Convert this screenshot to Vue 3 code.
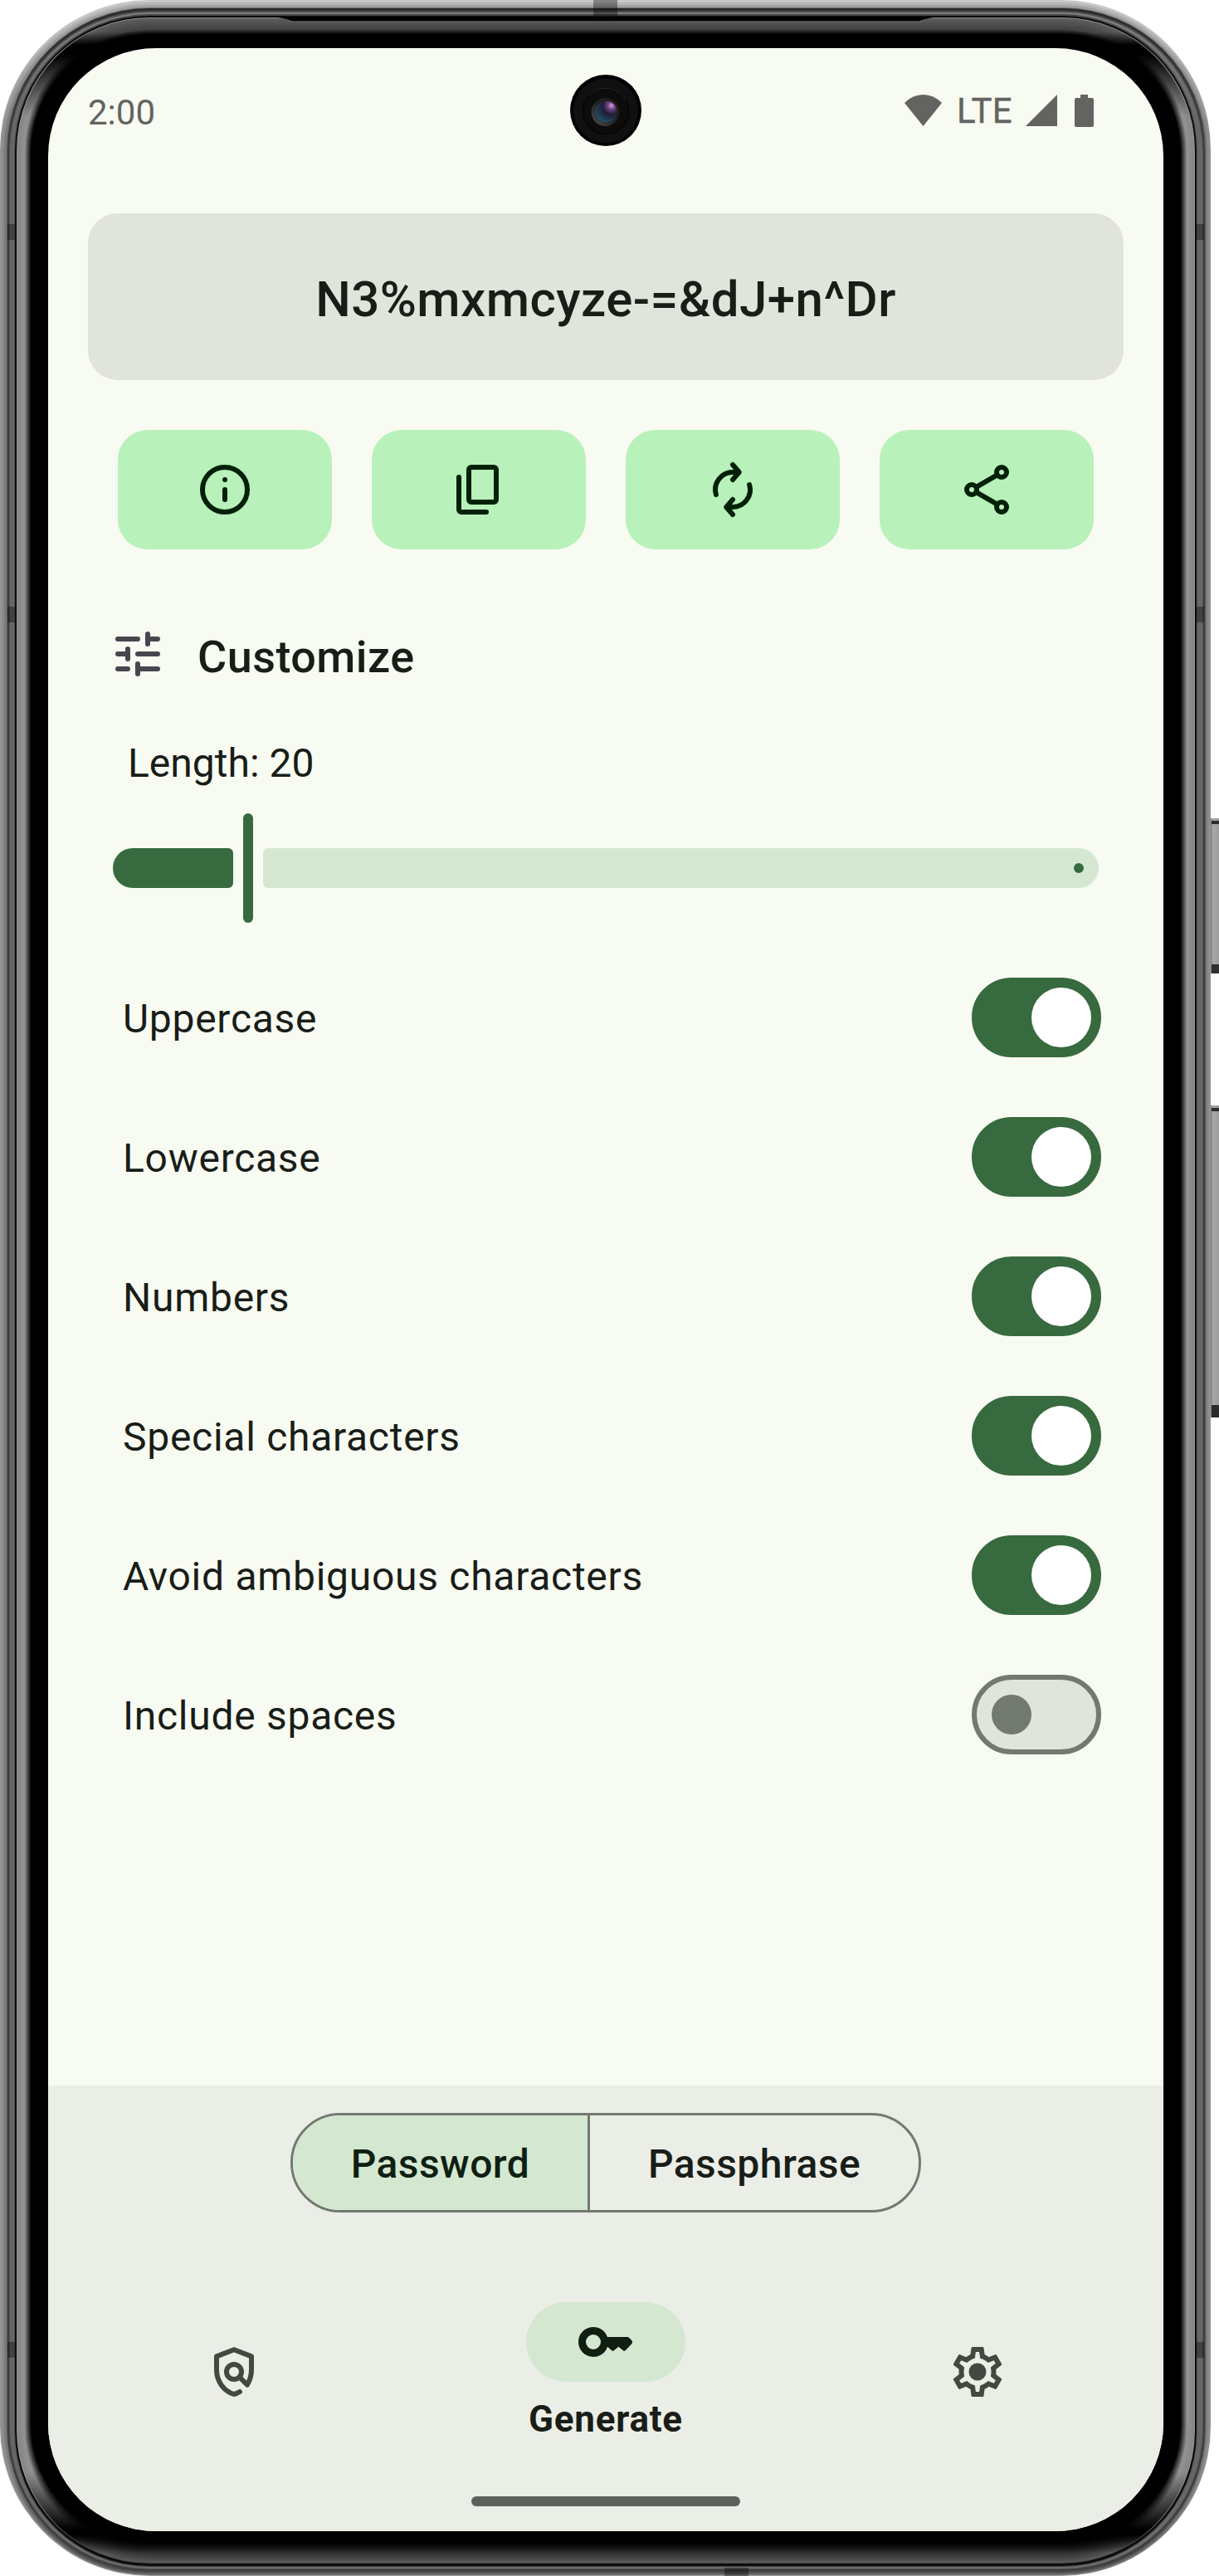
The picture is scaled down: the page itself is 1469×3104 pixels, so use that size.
<script setup>
import { ref } from 'vue'

const password = 'N3%mxmcyze-=&dJ+n^Dr'
const length = ref(20)

const actions = [
  { id: 'info', stroke: ['M12 12v4M12 8v.01', 'M12 3a9 9 0 1 1 0 18a9 9 0 1 1 0-18z'] },
  { id: 'copy', stroke: ['M9 3H18a1 1 0 0 1 1 1V16a1 1 0 0 1-1 1H9a1 1 0 0 1-1-1V4a1 1 0 0 1 1-1z', 'M4 7V20a1 1 0 0 0 1 1H15'] },
  { id: 'refresh', stroke: ['M5.3 14A7 7 0 0 1 12 5h2.5M12 2l2.6 3-2.6 3', 'M18.7 10A7 7 0 0 1 12 19h-2.5M12 22l-2.6-3 2.6-3'] },
  { id: 'share', stroke: ['M8 10.9 16.2 6.1M8 13.1l8.2 4.8', 'M18 3a2 2 0 1 1 0 4a2 2 0 1 1 0-4z', 'M6 10a2 2 0 1 1 0 4a2 2 0 1 1 0-4z', 'M18 17a2 2 0 1 1 0 4a2 2 0 1 1 0-4z'] }
]

const options = ref([
  { label: 'Uppercase', on: true },
  { label: 'Lowercase', on: true },
  { label: 'Numbers', on: true },
  { label: 'Special characters', on: true },
  { label: 'Avoid ambiguous characters', on: true },
  { label: 'Include spaces', on: false }
])

// Bezel layers, outermost first: [left, top, right, bottom] insets and the
// grey level at the top, side and bottom of the body.
const rim = [
  [0, 0, 0, 0, 200, 150, 160],
  [2, 3, 1, 1, 182, 140, 110],
  [5, 6, 4, 3, 162, 122, 84],
  [8, 9, 6, 5, 110, 92, 70],
  [9, 10, 7, 6, 44, 60, 62],
  [11, 13, 9, 8, 80, 84, 84],
  [12, 15, 10, 9, 125, 102, 108],
  [17, 17, 16, 11, 70, 84, 60],
  [18, 19, 17, 12, 20, 20, 20],
  [19, 20, 18, 13, 0, 0, 10],
  [20, 21, 19, 15, 140, 150, 70]
]
const glass = []
for (let i = 0; i <= 16; i++) {
  const t = i / 16
  glass.push([
    21 + 16 * t, 22 + 19 * t, 20 + 16 * t, 16 + 24 * t,
    t < 0.75 ? 92 - 40 * t : 62 * (1 - t) * 3,
    t < 0.5 ? 134 + 24 * t : 146 * (1 - t) * 2,
    88 * (1 - t)
  ])
}
const rings = [
  ...rim.map((v) => ({ v, inner: false })),
  ...glass.map((v) => ({ v, inner: true }))
].map(({ v, inner }, i) => ({
  id: 'ring' + i,
  inner,
  x: v[0],
  y: v[1],
  w: 1459 - v[0] - v[2],
  h: 3104 - v[1] - v[3],
  r: 180 - v[0],
  top: grey(v[4]),
  side: grey(v[5]),
  bottom: grey(v[6])
}))
function grey(n) {
  const k = Math.round(Math.max(0, n))
  return `rgb(${k},${k},${k})`
}
</script>

<template>
  <div class="phone">
    <svg class="frame" viewBox="0 0 1469 3104" width="1469" height="3104" aria-hidden="true">
      <defs>
        <linearGradient v-for="g in rings" :id="g.id" :key="g.id" gradientUnits="userSpaceOnUse" x1="0" y1="0" x2="0" y2="3104">
          <template v-if="g.inner">
            <stop offset="0.0125" :stop-color="g.top" />
            <stop offset="0.0175" stop-color="#000" />
            <stop offset="0.021" stop-color="#000" />
            <stop offset="0.045" :stop-color="g.side" />
            <stop offset="0.96" :stop-color="g.side" />
            <stop offset="0.982" stop-color="#000" />
            <stop offset="0.984" stop-color="#000" />
            <stop offset="0.991" :stop-color="g.bottom" />
          </template>
          <template v-else>
            <stop offset="0.006" :stop-color="g.top" />
            <stop offset="0.05" :stop-color="g.side" />
            <stop offset="0.96" :stop-color="g.side" />
            <stop offset="0.99" :stop-color="g.bottom" />
          </template>
        </linearGradient>
        <linearGradient id="key-face" x1="0" x2="1" y1="0" y2="0">
          <stop offset="0" stop-color="#777" />
          <stop offset="0.25" stop-color="#a8a8a8" />
          <stop offset="1" stop-color="#9c9c9c" />
        </linearGradient>
        <radialGradient id="lens" cx="0.74" cy="0.22" r="0.8">
          <stop offset="0" stop-color="#d8a0e6" />
          <stop offset="0.22" stop-color="#6c4580" />
          <stop offset="0.5" stop-color="#241a36" />
          <stop offset="1" stop-color="#1f4a60" />
        </radialGradient>
        <linearGradient id="lens-rim" x1="0" y1="1" x2="1" y2="0">
          <stop offset="0" stop-color="#626262" />
          <stop offset="0.5" stop-color="#262626" />
          <stop offset="1" stop-color="#1c1c1c" />
        </linearGradient>
      </defs>
      <g>
        <rect x="1459" y="986" width="10" height="187" fill="url(#key-face)" />
        <rect x="1460" y="989" width="9" height="4" fill="#2c2c2c" />
        <rect x="1460" y="1162" width="9" height="11" fill="#303030" />
        <rect x="1459" y="1332" width="10" height="376" fill="url(#key-face)" />
        <rect x="1460" y="1335" width="9" height="4" fill="#2c2c2c" />
        <rect x="1460" y="1693" width="9" height="15" fill="#2c2c2c" />
      </g>
      <rect v-for="g in rings" :key="g.id" :x="g.x" :y="g.y" :width="g.w" :height="g.h" :rx="g.r" :fill="`url(#${g.id})`" />
      <path d="M334 21h792l-18 5H352z" fill="#000" />
      <path d="M334 21.5q6 0 18 4.5H1108q12-4.500 18-4.500" fill="none" stroke="#777" stroke-width="1.200" />
      <g fill="#000" opacity="0.35">
        <rect x="715" y="0" width="29" height="19" />
        <rect x="9" y="270" width="9" height="19" />
        <rect x="1442" y="270" width="9" height="19" />
        <rect x="9" y="731" width="9" height="19" />
        <rect x="1442" y="731" width="9" height="19" />
        <rect x="9" y="2822" width="9" height="19" />
        <rect x="1442" y="2822" width="9" height="19" />
        <rect x="873" y="3094" width="29" height="10" />
      </g>
    </svg>

    <main class="screen">
      <header class="status">
        <span class="clock">2:00</span>
        <div class="signals">
          <svg class="wifi" viewBox="0 0 45 38" width="45" height="38"><path d="M0 10Q10 0 22.500 0T45 10L22.500 38z" /></svg>
          <span class="network">LTE</span>
          <svg class="cell" viewBox="0 0 38 38" width="38" height="38"><path d="M0 38 38 0V38z" /></svg>
          <svg class="battery" viewBox="0 0 23 39" width="23" height="39"><path d="M7 0h9v4h5a2 2 0 0 1 2 2v31a2 2 0 0 1-2 2H2a2 2 0 0 1-2-2V6a2 2 0 0 1 2-2h5z" /></svg>
        </div>
        <svg class="camera" viewBox="-43 -43 86 86" width="86" height="86">
          <circle r="43" fill="#000" />
          <circle r="39" cy="0.500" fill="#101010" />
          <circle r="27.500" cy="1" fill="#0c0c0c" stroke="#050505" stroke-width="1.500" />
          <path d="M-20-18A27 27 0 0 1 24-12" fill="none" stroke="#2a2a2a" />
          <circle r="17" cx="-0.500" cy="2" fill="url(#lens-rim)" opacity="0.800" />
          <circle r="13" cx="0.500" cy="1.500" fill="url(#lens)" />
        </svg>
      </header>

      <section class="secret">{{ password }}</section>

      <div class="actions">
        <button v-for="a in actions" :key="a.id" class="action" :aria-label="a.id">
          <svg class="icon line" viewBox="0 0 24 24"><path v-for="d in a.stroke" :key="d" :d="d" /></svg>
        </button>
      </div>

      <div class="heading">
        <svg class="icon line tune" viewBox="0 0 24 24">
          <path d="M4 6h8M16 4v4M16 6h4M4 12h4M8 10v4M12 12h8M4 18h4M12 16v4M12 18h8" />
        </svg>
        <h2>Customize</h2>
      </div>

      <p class="length">Length: {{ length }}</p>
      <div class="slider">
        <span class="filled"></span>
        <span class="handle"></span>
        <span class="rest"><i></i></span>
      </div>

      <ul class="options">
        <li v-for="o in options" :key="o.label">
          <span class="label">{{ o.label }}</span>
          <button class="switch" :class="{ on: o.on }" role="switch" :aria-checked="o.on" @click="o.on = !o.on"><i></i></button>
        </li>
      </ul>

      <footer class="dock">
        <div class="segments">
          <button class="segment first">Password</button>
          <button class="segment">Passphrase</button>
        </div>
        <nav class="tabs">
          <a class="tab side">
            <svg class="icon line" viewBox="0 0 24 24">
              <circle cx="12" cy="12" r="3" />
              <path d="M14.300 20q-1.100.7-2.300 1C7.800 19.700 5 15.700 5 11.200V5.800L12 3.100 19 5.800V11.200Q19 14.500 17.300 17.200L14.300 14.200" />
            </svg>
          </a>
          <a class="tab">
            <span class="pill">
              <svg class="icon" viewBox="0 0 24 24">
                <path fill-rule="evenodd" d="M7 6a6 6 0 0 1 5.650 4H20.700q.4 0 .7.300L22.400 11.300q.6.700.1 1.400L20 15.300q-.5.500-1 .1L17.100 13.900 15.300 15.400q-.4.400-.9 0L12.700 13.900A6 6 0 1 1 7 6zM7 9a3 3 0 1 0 0 6a3 3 0 1 0 0-6z" />
              </svg>
            </span>
            <span class="caption">Generate</span>
          </a>
          <a class="tab side">
            <svg class="icon" viewBox="0 0 24 24">
              <path d="M19.430 12.980c.04-.32.07-.64.07-.98 0-.34-.03-.66-.07-.98l2.110-1.650c.19-.15.24-.42.12-.64l-2-3.460c-.09-.16-.26-.25-.44-.25-.06 0-.12.01-.17.03l-2.490 1c-.52-.4-1.080-.73-1.690-.98l-.38-2.650C14.460 2.180 14.250 2 14 2h-4c-.25 0-.46.18-.49.42l-.38 2.650c-.61.25-1.170.59-1.690.98l-2.490-1c-.06-.02-.12-.03-.18-.03-.17 0-.34.09-.43.25l-2 3.460c-.13.22-.07.49.12.64l2.110 1.650c-.04.32-.07.65-.07.98 0 .33.03.66.07.98l-2.110 1.650c-.19.15-.24.42-.12.64l2 3.460c.09.16.26.25.44.25.06 0 .12-.01.17-.03l2.490-1c.52.4 1.080.73 1.690.98l.38 2.650c.03.24.24.42.49.42h4c.25 0 .46-.18.49-.42l.38-2.650c.61-.25 1.170-.59 1.690-.98l2.490 1c.06.02.12.03.18.03.17 0 .34-.09.43-.25l2-3.460c.12-.22.07-.49-.12-.64l-2.110-1.650zm-1.980-1.710c.04.31.05.52.05.73 0 .21-.02.43-.05.73l-.14 1.130.89.7 1.080.84-.7 1.210-1.270-.51-1.040-.42-.9.68c-.43.32-.84.56-1.250.73l-1.060.43-.16 1.130-.2 1.350h-1.400l-.19-1.350-.16-1.130-1.060-.43c-.43-.18-.83-.41-1.230-.71l-.91-.7-1.060.43-1.270.51-.7-1.210 1.080-.84.89-.7-.14-1.130c-.03-.31-.05-.54-.05-.74s.02-.43.05-.73l.14-1.130-.89-.7-1.080-.84.7-1.210 1.270.51 1.040.42.9-.68c.43-.32.84-.56 1.250-.73l1.060-.43.16-1.130.2-1.350h1.390l.19 1.350.16 1.130 1.060.43c.43.18.83.41 1.230.71l.91.7 1.060-.43 1.270-.51.7 1.210-1.070.85-.89.7.14 1.130z" />
              <circle cx="12" cy="12" r="3.500" />
            </svg>
          </a>
        </nav>
        <div class="home"></div>
      </footer>
    </main>
  </div>
</template>

<style>
body {
  margin: 0;
  background: #fff;
}
</style>

<style scoped>
.phone {
  position: relative;
  width: 1469px;
  height: 3104px;
  padding: 58px;
  box-sizing: border-box;
  overflow: hidden;
  font-family: Roboto, sans-serif;
  color: #191d18;
}
.frame {
  position: absolute;
  inset: 0;
}
.screen {
  position: relative;
  width: 1344px;
  height: 2992px;
  border-radius: 130px;
  background: #f8fbf2;
  overflow: hidden;
  display: flex;
  flex-direction: column;
}
button {
  border: 0;
  padding: 0;
  margin: 0;
  font: inherit;
  color: inherit;
  background: none;
}
.icon {
  width: 72px;
  height: 72px;
  display: block;
  fill: currentColor;
}
.icon.line {
  fill: none;
  stroke: currentColor;
  stroke-width: 2;
  stroke-linecap: round;
  stroke-linejoin: round;
}
.status {
  display: flex;
  justify-content: space-between;
  height: 199px;
  padding: 0 84px 0 48px;
  color: #636461;
  fill: #636461;
}
.clock {
  font-size: 42px;
  line-height: 50px;
  margin-top: 53px;
}
.signals {
  display: flex;
  align-items: flex-start;
  padding-top: 56px;
}
.network {
  width: 73px;
  margin: -3px 10px 0 18px;
  font-size: 42px;
  line-height: 46px;
  letter-spacing: 0.4px;
  -webkit-text-stroke: 0.4px currentColor;
}
.cell {
  margin-right: 21px;
}
.camera {
  position: absolute;
  left: 629px;
  top: 32px;
}
.secret {
  height: 201px;
  box-sizing: border-box;
  margin: 0 48px;
  padding-top: 5px;
  border-radius: 36px;
  background: #e1e4db;
  display: flex;
  align-items: center;
  justify-content: center;
  font-size: 60px;
  font-weight: 500;
  letter-spacing: 0.45px;
}
.actions {
  display: flex;
  gap: 48px;
  padding: 0 84px;
  margin-top: 60px;
}
.action {
  flex: 1;
  height: 144px;
  border-radius: 36px;
  background: #b8f1b9;
  color: #002107;
  display: flex;
  align-items: center;
  justify-content: center;
}
.heading {
  display: flex;
  align-items: center;
  margin: 90px 72px 0;
  height: 78px;
}
.tune {
  color: #49454f;
  margin-top: -6px;
}
.heading h2 {
  margin: 2px 0 0 36px;
  font-size: 54px;
  line-height: 72px;
  font-weight: 500;
  letter-spacing: 0.45px;
}
.length {
  margin: 54px 0 0 96px;
  font-size: 48px;
  line-height: 72px;
}
.slider {
  display: flex;
  align-items: center;
  gap: 12px;
  height: 132px;
  margin: 24px 78px 0;
}
.filled {
  width: 145px;
  height: 48px;
  border-radius: 24px 6px 6px 24px;
  background: #376a3e;
}
.handle {
  width: 12px;
  height: 132px;
  border-radius: 6px;
  background: #376a3e;
}
.rest {
  flex: 1;
  height: 48px;
  border-radius: 6px 24px 24px 6px;
  background: #d4e8d1;
  display: flex;
  align-items: center;
  justify-content: flex-end;
}
.rest i {
  width: 12px;
  height: 12px;
  margin-right: 18px;
  border-radius: 50%;
  background: #376a3e;
}
.options {
  list-style: none;
  margin: 30px 75px 0 90px;
  padding: 0;
}
.options li {
  height: 168px;
  display: flex;
  align-items: center;
  justify-content: space-between;
  font-size: 48px;
  letter-spacing: 0.72px;
}
.label {
  padding-top: 3px;
}
.switch {
  width: 156px;
  height: 96px;
  box-sizing: border-box;
  border: 6px solid #727970;
  border-radius: 48px;
  background: #e1e4db;
  display: flex;
  align-items: center;
  padding: 0 18px;
}
.switch i {
  width: 48px;
  height: 48px;
  border-radius: 50%;
  background: #727970;
}
.switch.on {
  border-color: #376a3e;
  background: #376a3e;
  justify-content: flex-end;
  padding: 0 6px;
}
.switch.on i {
  width: 72px;
  height: 72px;
  background: #fff;
}
.dock {
  margin-top: auto;
  height: 537px;
  background: #ebeee7;
  display: flex;
  flex-direction: column;
  align-items: center;
}
.segments {
  display: flex;
  width: 760px;
  height: 120px;
  box-sizing: border-box;
  margin-top: 33px;
  border: 3px solid #727970;
  border-radius: 60px;
  overflow: hidden;
}
.segment {
  flex: 1;
  padding-top: 2px;
  font-size: 48px;
  font-weight: 500;
  letter-spacing: 0.45px;
}
.segment.first {
  flex: 0 0 358px;
  box-sizing: border-box;
  border-right: 3px solid #727970;
  background: #d4e8d1;
  color: #101f12;
}
.tabs {
  display: flex;
  align-self: stretch;
  margin-top: 108px;
  height: 168px;
}
.tab {
  flex: 1;
  display: flex;
  flex-direction: column;
  align-items: center;
}
.side {
  justify-content: center;
  color: #424940;
}
.pill {
  flex: none;
  width: 192px;
  height: 96px;
  border-radius: 48px;
  background: #d4e8d1;
  color: #101f12;
  display: flex;
  align-items: center;
  justify-content: center;
}
.caption {
  margin-top: 15px;
  font-size: 44px;
  line-height: 60px;
  font-weight: 700;
  letter-spacing: 0.75px;
}
.home {
  width: 324px;
  height: 12px;
  margin-top: 66px;
  border-radius: 6px;
  background: #5e605b;
}
</style>
